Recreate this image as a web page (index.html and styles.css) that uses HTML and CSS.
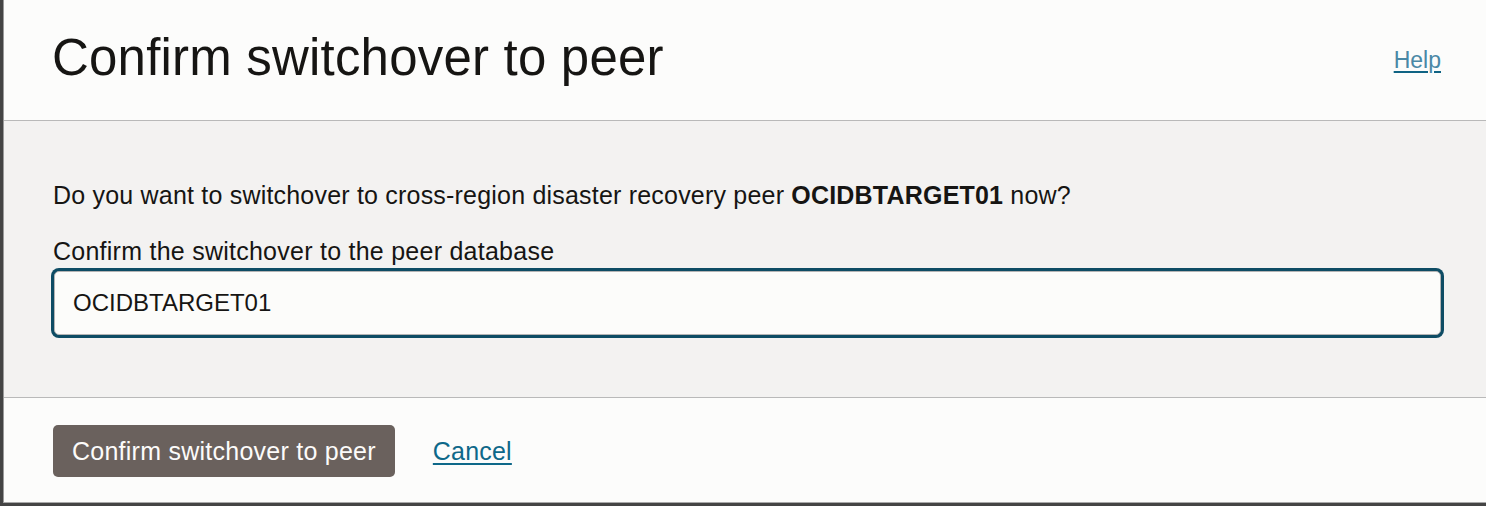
FILE: index.html
```html
<!DOCTYPE html>
<html lang="en">
<head>
<meta charset="utf-8">
<title>Confirm switchover to peer</title>
<link rel="stylesheet" href="styles.css">
</head>
<body>
<div class="dialog">
  <header class="dlg-header">
    <h1 class="dlg-title">Confirm switchover to peer</h1>
    <a class="help-link" href="#">Help</a>
  </header>
  <section class="dlg-body">
    <p class="question">Do you want to switchover to cross-region disaster recovery peer <strong>OCIDBTARGET01</strong> now?</p>
    <label class="field-label" for="peer">Confirm the switchover to the peer database</label>
    <input class="field-input" id="peer" type="text" value="OCIDBTARGET01">
  </section>
  <footer class="dlg-footer">
    <button class="btn-primary" type="button">Confirm switchover to peer</button>
    <a class="cancel-link" href="#">Cancel</a>
  </footer>
</div>
</body>
</html>
```
FILE: styles.css
```css
html, body {
  margin: 0;
  padding: 0;
  height: 100%;
}
body {
  background: #444444;
  font-family: "Liberation Sans", Arial, sans-serif;
  color: #161513;
  overflow: hidden;
}
.dialog {
  margin-left: 3px;
  width: 1483px;
  height: 503px;
  display: flex;
  flex-direction: column;
  background: #fcfcfb;
  border-left: 1px solid #9a9a9a;
  border-bottom: 1px solid #a9a9a9;
  box-sizing: border-box;
}
.dlg-header {
  flex: none;
  height: 121px;
  box-sizing: border-box;
  display: flex;
  justify-content: space-between;
  align-items: flex-start;
  padding: 28px 45px 0 48px;
  border-bottom: 1px solid #b9b9b9;
  background: #fcfcfb;
}
.dlg-title {
  margin: 0;
  font-size: 51px;
  line-height: 60px;
  font-weight: normal;
  letter-spacing: 0.2px;
  color: #161513;
}
.help-link {
  margin-top: 18px;
  font-size: 23px;
  line-height: 28px;
  color: #4a88a6;
  text-decoration: underline;
  text-decoration-color: #0f6383;
  text-decoration-thickness: 2px;
  text-underline-offset: 3px;
}
.dlg-body {
  flex: 1;
  background: #f3f2f1;
  padding: 59px 45px 0 49px;
  border-bottom: 1px solid #b9b9b9;
  display: flex;
  flex-direction: column;
  align-items: stretch;
}
.question {
  margin: 0 0 26px;
  font-size: 25px;
  line-height: 30px;
  letter-spacing: 0.2px;
}
.question strong {
  font-weight: bold;
  letter-spacing: 0.2px;
}
.field-label {
  font-size: 25px;
  line-height: 30px;
  letter-spacing: 0.25px;
  margin-bottom: 5px;
}
.field-input {
  margin-left: 1px;
  height: 64px;
  box-sizing: border-box;
  border: 1px solid #b4b4b4;
  border-radius: 5px;
  box-shadow: 0 0 0 3px #0e4c64;
  background: #fcfcfa;
  padding: 0 18px;
  font-family: "Liberation Sans", Arial, sans-serif;
  font-size: 24px;
  color: #161513;
  outline: none;
}
.dlg-footer {
  flex: none;
  height: 104px;
  box-sizing: border-box;
  padding: 27px 0 0 49px;
  display: flex;
  align-items: flex-start;
  gap: 38px;
  background: #fcfcfb;
}
.btn-primary {
  height: 52px;
  padding: 0 19px;
  border: none;
  border-radius: 5px;
  background: #6a615d;
  color: #fcfbfa;
  font-family: "Liberation Sans", Arial, sans-serif;
  font-size: 25px;
  line-height: 52px;
  letter-spacing: 0.25px;
}
.cancel-link {
  margin-top: 11px;
  font-size: 25px;
  line-height: 30px;
  letter-spacing: 0.2px;
  color: #0e6889;
  text-decoration: underline;
  text-decoration-thickness: 2px;
  text-underline-offset: 3px;
}
```
